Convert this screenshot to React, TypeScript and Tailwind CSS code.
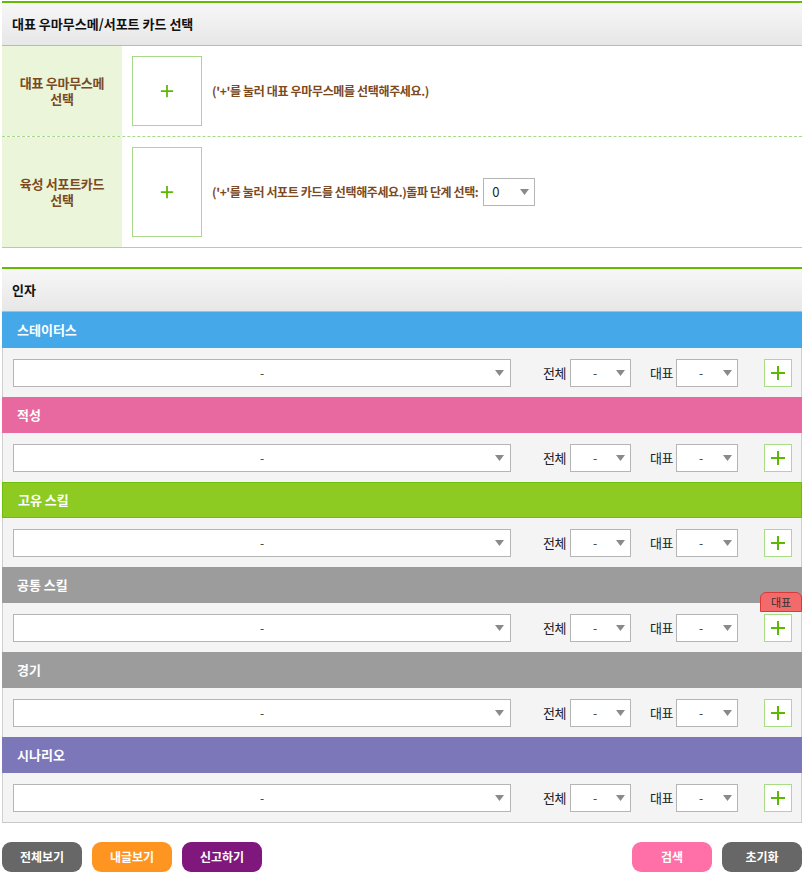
import React from 'react'

const font = { fontFamily: '"Noto Sans CJK KR", "Noto Sans", sans-serif' }

const categories = [
  { name: '스테이터스', bar: 'bg-[#45a8e9]' },
  { name: '적성', bar: 'bg-[#e868a0]' },
  { name: '고유 스킬', bar: 'bg-[#8dcb23] border border-[#6cbf0a]' },
  { name: '공통 스킬', bar: 'bg-[#9c9c9c]', badge: true },
  { name: '경기', bar: 'bg-[#9c9c9c]' },
  { name: '시나리오', bar: 'bg-[#7b77b9]' },
]

const Arrow = () => (
  <svg width="9" height="6" viewBox="0 0 9 6" className="shrink-0">
    <path d="M0 0 L9 0 L4.5 6 Z" fill="#8a8a8a" />
  </svg>
)

const Plus = ({ size = 16 }: { size?: number }) => (
  <svg width={size} height={size} viewBox="0 0 16 16">
    <path d="M8 1 V15 M1 8 H15" stroke="#5cb800" strokeWidth="2" />
  </svg>
)

const SmallSelect = ({ width }: { width: string }) => (
  <div className={`flex h-[28px] items-center justify-between border border-[#b5b5b5] bg-white pl-[22px] pr-[5px] text-[12px] text-[#333] ${width}`}>
    <span>-</span>
    <Arrow />
  </div>
)

const SectionHeader = ({ title }: { title: string }) => (
  <div className="flex h-[45px] items-center border-t-2 border-b border-t-[#66bb00] border-b-[#b9b9b9] bg-gradient-to-b from-[#f7f7f7] to-[#e7e7e7] px-[10px] text-[13px] font-bold text-[#111]">
    {title}
  </div>
)

export default function App() {
  return (
    <div className="min-h-[878px] bg-white px-[2px] pt-[1px]" style={font}>
      <div className="w-[800px]">
        <SectionHeader title="대표 우마무스메/서포트 카드 선택" />
        <div className="flex h-[91px] border-b border-dashed border-b-[#a8d98a]">
          <div className="flex w-[120px] flex-col items-center justify-center bg-[#eaf5d9] text-center text-[13px] font-bold leading-[16px] tracking-[-0.3px] text-[#7b4a1f]">
            <div>대표 우마무스메</div>
            <div>선택</div>
          </div>
          <div className="flex items-center pl-[10px]">
            <div className="flex h-[70px] w-[70px] items-center justify-center border border-[#a8d98a] bg-white">
              <Plus size={14} />
            </div>
            <span className="ml-[10px] text-[12px] font-bold tracking-[-0.35px] text-[#7b4a1f]">('+'를 눌러 대표 우마무스메를 선택해주세요.)</span>
          </div>
        </div>
        <div className="flex h-[111px] border-b border-b-[#a8d98a]">
          <div className="flex w-[120px] flex-col items-center justify-center bg-[#eaf5d9] text-center text-[13px] font-bold leading-[16px] tracking-[-0.3px] text-[#7b4a1f]">
            <div>육성 서포트카드</div>
            <div>선택</div>
          </div>
          <div className="flex items-center pl-[10px]">
            <div className="flex h-[90px] w-[70px] items-center justify-center border border-[#a8d98a] bg-white">
              <Plus size={14} />
            </div>
            <span className="ml-[10px] text-[12px] font-bold tracking-[-0.4px] text-[#7b4a1f]">('+'를 눌러 서포트 카드를 선택해주세요.)돌파 단계 선택:</span>
            <div className="ml-[5px] flex h-[28px] w-[52px] items-center justify-between border border-[#b5b5b5] bg-white pl-[8px] pr-[5px] text-[13px] text-[#222]">
              <span>0</span>
              <Arrow />
            </div>
          </div>
        </div>

        <div className="mt-[19px]">
          <SectionHeader title="인자" />
          <div className="border-b border-b-[#c8c8c8]">
            {categories.map(c => (
              <div key={c.name}>
                <div className={`flex h-[36px] items-center px-[15px] text-[13px] font-bold text-white ${c.bar}`}>{c.name}</div>
                <div className="relative flex h-[49px] items-center border-x border-[#cfcfcf] bg-[#f4f4f4] pl-[10px]">
                  <div className="relative flex h-[28px] w-[498px] items-center justify-center border border-[#b5b5b5] bg-white text-[12px] text-[#333]">
                    <span>-</span>
                    <div className="absolute right-[6px] top-[10px]">
                      <Arrow />
                    </div>
                  </div>
                  <span className="ml-[32px] w-[27px] text-[13px] tracking-[-0.5px] text-[#222]">전체</span>
                  <SmallSelect width="w-[61px]" />
                  <span className="ml-[19px] w-[26px] text-[13px] tracking-[-0.5px] text-[#222]">대표</span>
                  <SmallSelect width="w-[62px]" />
                  <div className="ml-[26px] flex h-[28px] w-[28px] items-center justify-center border border-[#a8dd86] bg-white">
                    <Plus size={16} />
                  </div>
                  {c.badge && (
                    <div className="absolute right-[-1px] top-[-11px] flex h-[20px] w-[42px] items-center justify-center rounded-t-[6px] border border-[#d83a3a] bg-[#f26a6a] text-[11px] text-[#333]">
                      대표
                    </div>
                  )}
                </div>
              </div>
            ))}
          </div>
        </div>

        <div className="mt-[19px] flex items-center">
          <button className="h-[30px] w-[80px] rounded-[9px] bg-[#676767] text-[12px] font-bold text-white">전체보기</button>
          <button className="ml-[10px] h-[30px] w-[80px] rounded-[9px] bg-[#ff9521] text-[12px] font-bold text-white">내글보기</button>
          <button className="ml-[10px] h-[30px] w-[80px] rounded-[9px] bg-[#80177d] text-[12px] font-bold text-white">신고하기</button>
          <div className="flex-1" />
          <button className="h-[30px] w-[80px] rounded-[9px] bg-[#ff70a8] text-[12px] font-bold text-white">검색</button>
          <button className="ml-[10px] h-[30px] w-[80px] rounded-[9px] bg-[#676767] text-[12px] font-bold text-white">초기화</button>
        </div>
      </div>
    </div>
  )
}
